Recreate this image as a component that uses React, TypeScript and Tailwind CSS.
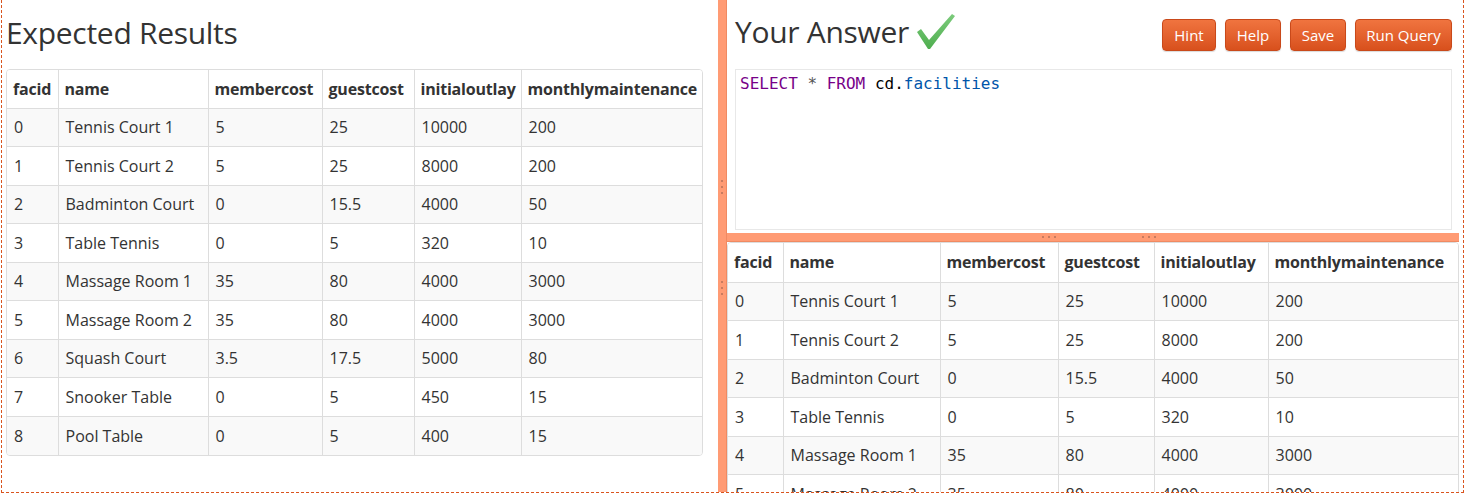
import React from 'react';

const COLS = ['facid', 'name', 'membercost', 'guestcost', 'initialoutlay', 'monthlymaintenance'];

const ROWS: string[][] = [
  ['0', 'Tennis Court 1', '5', '25', '10000', '200'],
  ['1', 'Tennis Court 2', '5', '25', '8000', '200'],
  ['2', 'Badminton Court', '0', '15.5', '4000', '50'],
  ['3', 'Table Tennis', '0', '5', '320', '10'],
  ['4', 'Massage Room 1', '35', '80', '4000', '3000'],
  ['5', 'Massage Room 2', '35', '80', '4000', '3000'],
  ['6', 'Squash Court', '3.5', '17.5', '5000', '80'],
  ['7', 'Snooker Table', '0', '5', '450', '15'],
  ['8', 'Pool Table', '0', '5', '400', '15'],
];

const FONT = { fontFamily: '"Open Sans", "Noto Sans", sans-serif' };

interface ResultTableProps {
  widths: string[];
  rounded: string;
  border: string;
  headerH: string;
}

const ResultTable: React.FC<ResultTableProps> = ({ widths, rounded, border, headerH }) => (
  <div className={`${border} border-[#dddddd] ${rounded} overflow-hidden`}>
    <table className="w-full table-fixed border-collapse text-[16px] text-[#333333]">
      <colgroup>
        {widths.map((w, i) => (
          <col key={i} className={w} />
        ))}
      </colgroup>
      <thead>
        <tr className={`${headerH} bg-white`}>
          {COLS.map((c, i) => (
            <th
              key={c}
              className={`text-left font-bold px-[6px] align-middle tracking-[-0.2px] whitespace-nowrap ${i > 0 ? 'border-l border-[#dddddd]' : ''}`}
            >
              {c}
            </th>
          ))}
        </tr>
      </thead>
      <tbody>
        {ROWS.map((r, ri) => (
          <tr key={ri} className={`h-[38.5px] border-t border-[#dddddd] ${ri % 2 === 0 ? 'bg-[#f9f9f9]' : 'bg-white'}`}>
            {r.map((v, ci) => (
              <td key={ci} className={`px-[7px] align-middle whitespace-nowrap ${ci > 0 ? 'border-l border-[#dddddd]' : ''}`}>
                {v}
              </td>
            ))}
          </tr>
        ))}
      </tbody>
    </table>
  </div>
);

const Button: React.FC<{ label: string; w: string }> = ({ label, w }) => (
  <button
    className={`${w} h-[32px] rounded-[4px] border border-[#c9491a] bg-gradient-to-b from-[#f0743f] to-[#d8501c] text-white text-[15px] leading-[28px] shadow-[0_1px_1px_rgba(0,0,0,0.15)]`}
  >
    {label}
  </button>
);

const Check = () => (
  <svg width="40" height="38" viewBox="0 0 40 38" className="ml-[7px]">
    <defs>
      <linearGradient id="chk" x1="0" y1="0" x2="0" y2="1">
        <stop offset="0" stopColor="#7ccb7c" />
        <stop offset="1" stopColor="#4fae4f" />
      </linearGradient>
    </defs>
    <path d="M1 19 L5 16 L13 27 L36 1 L39 3 L14 36 L12 36 Z" fill="url(#chk)" />
  </svg>
);

const Dots: React.FC<{ vertical?: boolean }> = ({ vertical }) => (
  <div className={`flex ${vertical ? 'flex-col' : 'flex-row'} gap-[4px]`}>
    <span className="block w-[2px] h-[2px] bg-[#c97b5f]" />
    <span className="block w-[2px] h-[2px] bg-[#c97b5f]" />
    <span className="block w-[2px] h-[2px] bg-[#c97b5f]" />
  </div>
);

export default function App() {
  return (
    <div className="bg-white w-[1471px] h-[502px]" style={FONT}>
      <div className="ml-[1px] w-[1463px] h-[493px] border-x border-b border-dashed border-[#d9541e] flex overflow-hidden">
        {/* left pane */}
        <div className="w-[716px] pl-[4px] shrink-0">
          <h2 className="h-[69px] pt-[13px] text-[30px] leading-[40px] text-[#333333] tracking-[-0.3px]">Expected Results</h2>
          <div className="w-[697px]">
            <ResultTable
              widths={['w-[51px]', 'w-[150px]', 'w-[114px]', 'w-[92px]', 'w-[107px]', 'w-[181px]']}
              rounded="rounded-[4px]"
              border="border"
              headerH="h-[38px]"
            />
          </div>
        </div>

        {/* vertical splitter */}
        <div className="relative w-[9px] shrink-0 bg-[#ff9b74] border-r border-[#f08a62]">
          <div className="absolute left-[3px] top-[180px]">
            <Dots vertical />
          </div>
          <div className="absolute left-[3px] top-[281px]">
            <Dots vertical />
          </div>
        </div>

        {/* right pane */}
        <div className="w-[736px] shrink-0 flex flex-col pr-[4px]">
          <div className="h-[233px] shrink-0 pl-[8px] pr-[7px] flex flex-col">
            <div className="h-[69px] flex justify-between items-start">
              <div className="flex items-center pt-[12px]">
                <h2 className="text-[30px] leading-[40px] text-[#333333] tracking-[-0.3px]">Your Answer</h2>
                <Check />
              </div>
              <div className="flex gap-[9px] pt-[19px]">
                <Button label="Hint" w="w-[54px]" />
                <Button label="Help" w="w-[56px]" />
                <Button label="Save" w="w-[56px]" />
                <Button label="Run Query" w="w-[97px]" />
              </div>
            </div>
            <div className="h-[161px] border border-[#e8e8e8] px-[4px] pt-[2px]">
              <pre className="text-[16px] leading-[24px]" style={{ fontFamily: '"DejaVu Sans Mono", monospace' }}>
                <span className="text-[#770088]">SELECT</span> <span className="text-[#555555]">*</span>{' '}
                <span className="text-[#770088]">FROM</span> <span className="text-black">cd.</span>
                <span className="text-[#0055aa]">facilities</span>
              </pre>
            </div>
          </div>

          {/* horizontal splitter */}
          <div className="relative h-[9px] shrink-0 bg-[#ff9b74] border-b border-[#f08a62]">
            <div className="absolute left-[315px] top-[3px]">
              <Dots />
            </div>
            <div className="absolute left-[415px] top-[3px]">
              <Dots />
            </div>
          </div>

          <div className="w-[732px]">
            <ResultTable
              widths={['w-[55px]', 'w-[157px]', 'w-[118px]', 'w-[96px]', 'w-[114px]', 'w-[190px]']}
              rounded="rounded-tl-[4px] rounded-tr-[4px]"
              border="border"
              headerH="h-[39px]"
            />
          </div>
        </div>
      </div>
    </div>
  );
}
